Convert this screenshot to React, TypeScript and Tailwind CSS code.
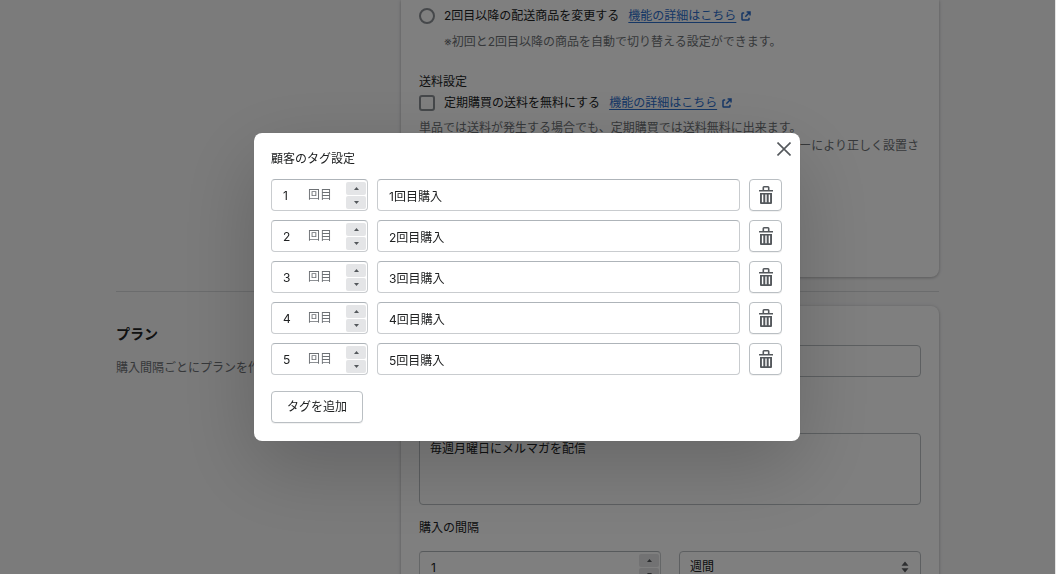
import { useState } from "react";

const FONT = "font-[Inter,'Noto_Sans_CJK_JP',sans-serif]";

function ExternalIcon() {
  return (
    <svg viewBox="0 0 10 10" className="size-2.5 shrink-0 fill-none stroke-current stroke-[1.5]" aria-hidden="true">
      <path d="M3.200 2H1.800Q1 2 1 2.800V8.200Q1 9 1.800 9H7.200Q8 9 8 8.200V6.800" />
      <path d="M5.600 1H9V4.400M9 1 4.300 5.700" />
    </svg>
  );
}

function TrashIcon() {
  return (
    <svg viewBox="0 0 14 18" className="h-[18px] w-3.5 fill-[#54585c]" aria-hidden="true">
      <path fillRule="evenodd" d="M3.500 4V1.500Q3.500 0 5 0h4q1.500 0 1.500 1.500V4H14v1.600H0V4zM5.100 4h3.800V1.600H5.100z" />
      <path fillRule="evenodd" d="M1 7h12v10q0 1-1 1H2q-1 0-1-1zM2.900 8.600V16.200h1.400V8.600zM6.300 8.600V16.200h1.400V8.600zM9.700 8.600V16.200h1.400V8.600z" />
    </svg>
  );
}

function Stepper({ onStep }: { onStep: (delta: number) => void }) {
  return (
    <div className="flex w-5 shrink-0 flex-col gap-px">
      <button type="button" aria-label="増やす" onClick={() => onStep(1)} className="flex h-[13px] items-center justify-center rounded-[2px] bg-[#e4e5e7]">
        <svg viewBox="0 0 5 3" className="h-[3px] w-[5px] fill-[#54585c]"><path d="M0 3 2.500 0 5 3z" /></svg>
      </button>
      <button type="button" aria-label="減らす" onClick={() => onStep(-1)} className="flex h-[13px] items-center justify-center rounded-[2px] bg-[#e4e5e7]">
        <svg viewBox="0 0 5 3" className="h-[3px] w-[5px] fill-[#54585c]"><path d="M0 0h5L2.500 3z" /></svg>
      </button>
    </div>
  );
}

function NumberField({ label, initial, suffix }: { label: string; initial: number; suffix?: string }) {
  const [value, setValue] = useState(initial);
  return (
    <div className="flex h-8 min-w-0 items-center rounded border border-[#c9cccf] border-t-[#aeb4b9] bg-white pr-px pl-[11px]">
      <input
        aria-label={label}
        inputMode="numeric"
        value={value}
        onChange={(e) => setValue(Number(e.target.value) || 0)}
        className="h-full w-0 min-w-0 flex-1 bg-transparent outline-none"
      />
      {suffix && <span className="mr-3.5 shrink-0 text-[#6d7175]">{suffix}</span>}
      <Stepper onStep={(d) => setValue(value + d)} />
    </div>
  );
}

function DetailLink() {
  return (
    <a href="#details" className="flex items-center gap-[5px] text-[#2c6ecb]">
      <span className="underline underline-offset-2">機能の詳細はこちら</span>
      <ExternalIcon />
    </a>
  );
}

const card = "rounded-lg bg-white px-[18px] shadow-[0_0_4px_rgba(23,24,24,0.1),0_1px_3px_rgba(0,0,0,0.2)]";
const columns = "grid grid-cols-[267px_minmax(0,1fr)] gap-[18px]";

function SettingsPage() {
  return (
    <main className="mx-auto max-w-[823px]">
      <section className={columns}>
        <div />
        <div className={card + " h-[277px] rounded-t-none pt-1.5"}>
          <div className="flex items-center gap-[9px]">
            <label className="flex items-center gap-[9px]">
              <input type="radio" name="delivery" className="size-4 appearance-none rounded-full border-2 border-[#8c9196]" />
              2回目以降の配送商品を変更する
            </label>
            <DetailLink />
          </div>
          <p className="mt-1.5 pl-[25px] text-[#6d7175]">※初回と2回目以降の商品を自動で切り替える設定ができます。</p>
          <h3 className="mt-5">送料設定</h3>
          <div className="mt-px flex items-center gap-[9px]">
            <label className="flex items-center gap-[9px]">
              <input type="checkbox" className="size-4 appearance-none rounded-[3px] border-2 border-[#8c9196]" />
              定期購買の送料を無料にする
            </label>
            <DetailLink />
          </div>
          <p className="mt-1.5 leading-[18px] text-[#6d7175]">単品では送料が発生する場合でも、定期購買では送料無料に出来ます。</p>
          <p className="pr-0.5 text-right leading-[18px] text-[#6d7175]">ーにより正しく設置さ</p>
        </div>
      </section>

      <hr className="my-3.5 border-[#d6d8da]" />

      <section className={columns}>
        <div className="pt-[18px]">
          <h2 className="text-sm font-semibold">プラン</h2>
          <p className="mt-3.5 text-[#6d7175]">購入間隔ごとにプランを作</p>
        </div>
        <div className={card + " pt-[39px] pb-[18px]"}>
          <input aria-label="プラン名" className="block h-8 w-full rounded border border-[#babfc3] px-[11px]" />
          <textarea
            aria-label="プランの説明"
            defaultValue="毎週月曜日にメルマガを配信"
            className="mt-14 block h-[72px] w-full resize-none rounded border border-[#babfc3] px-2.5 py-[5px]"
          />
          <h3 className="mt-[13px]">購入の間隔</h3>
          <div className="mt-[13px] grid grid-cols-2 gap-[18px]">
            <NumberField label="購入の間隔" initial={1} />
            <div className="flex h-8 items-center rounded border border-[#babfc3] pr-[11px]">
              <select aria-label="間隔の単位" className="min-w-0 flex-1 appearance-none bg-transparent pl-2.5">
                <option>週間</option>
              </select>
              <svg viewBox="0 0 8 12" className="h-3 w-2 fill-[#5c5f62]" aria-hidden="true"><path d="M0.500 4.800 4 0.500 7.500 4.800zM0.500 7.200h7L4 11.500z" /></svg>
            </div>
          </div>
        </div>
      </section>
    </main>
  );
}

function TagDialog() {
  return (
    <div className="fixed inset-0 flex items-center justify-center border-r border-[#e4e4e4] pr-px">
      <div className="absolute inset-0 bg-black/50" />
      <div
        role="dialog"
        aria-modal="true"
        aria-labelledby="tag-title"
        className="relative w-full max-w-[546px] rounded-lg bg-white py-[18px] pr-[18px] pl-[17px] shadow-[0_26px_80px_rgba(0,0,0,0.2),0_0_1px_rgba(0,0,0,0.2)]"
      >
        <h2 id="tag-title" className="leading-4">顧客のタグ設定</h2>
        <button type="button" aria-label="閉じる" className="absolute top-2 right-2 p-px">
          <svg viewBox="0 0 14 14" className="size-3.5 fill-none stroke-[#54585c] stroke-[1.6]"><path d="M0.500 0.500l13 13M13.500 0.500l-13 13" /></svg>
        </button>
        <ul className="mt-3 flex flex-col gap-[9px]">
          {[1, 2, 3, 4, 5].map((n) => (
            <li key={n} className="grid grid-cols-[97px_minmax(0,1fr)_33px] gap-[9px]">
              <NumberField label={"タグ" + n + "の回数"} initial={n} suffix="回目" />
              <input
                aria-label={"タグ" + n}
                defaultValue={n + "回目購入"}
                className="h-8 min-w-0 rounded border border-[#c9cccf] border-t-[#aeb4b9] px-[11px]"
              />
              <button type="button" aria-label={"タグ" + n + "を削除"} className="flex h-8 items-center justify-center rounded border border-[#babfc3] bg-white shadow-[0_1px_0_rgba(0,0,0,0.05)]">
                <TrashIcon />
              </button>
            </li>
          ))}
        </ul>
        <button type="button" className="mt-4 block h-8 rounded border border-[#babfc3] bg-white px-[15px] shadow-[0_1px_0_rgba(0,0,0,0.05)]">
          タグを追加
        </button>
      </div>
    </div>
  );
}

export default function App() {
  return (
    <div className={FONT + " h-screen overflow-hidden bg-[#f6f6f7] pr-px text-xs leading-5 text-[#202223]"}>
      <SettingsPage />
      <TagDialog />
    </div>
  );
}
